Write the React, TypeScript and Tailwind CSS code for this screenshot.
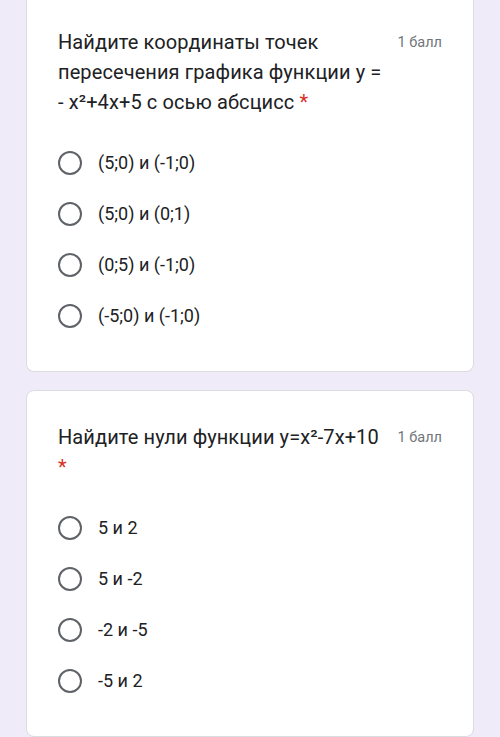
import React from 'react'

type Question = {
  lines: string[]
  options: string[]
}

const questions: Question[] = [
  {
    lines: ['Найдите координаты точек', 'пересечения графика функции у =', '- x²+4x+5 с осью абсцисс'],
    options: ['(5;0) и (-1;0)', '(5;0) и (0;1)', '(0;5) и (-1;0)', '(-5;0) и (-1;0)'],
  },
  {
    lines: ['Найдите нули функции у=x²-7x+10', ''],
    options: ['5 и 2', '5 и -2', '-2 и -5', '-5 и 2'],
  },
]

function Radio() {
  return <span className="h-6 w-6 shrink-0 rounded-full border-[2.5px] border-[#5f6368]" />
}

function QuestionCard({ q, first }: { q: Question; first?: boolean }) {
  return (
    <div
      className={
        first
          ? 'rounded-b-lg border border-t-0 border-[#dadce0] bg-white px-[31px] pt-[27px] pb-[30px]'
          : 'rounded-lg border border-[#dadce0] bg-white px-[31px] pt-[31px] pb-[30px]'
      }
    >
      <div className="flex items-start gap-[12px]">
        <div className="flex-1 text-[20px] leading-[30px] tracking-[0.1px] text-[#202124]">
          {q.lines.map((l, i) => (
            <div key={i} className="whitespace-nowrap">
              {l}
              {i === q.lines.length - 1 && (
                <span className="text-[#d93025]">{l ? ' *' : '*'}</span>
              )}
            </div>
          ))}
        </div>
        <div className="shrink-0 pt-[1px] text-[14.5px] leading-[30px] text-[#70757a]">1 балл</div>
      </div>
      <div className="mt-5">
        {q.options.map((o) => (
          <div key={o} className="flex h-[51px] items-center gap-4">
            <Radio />
            <span className="text-[18px] text-[#202124]">{o}</span>
          </div>
        ))}
      </div>
    </div>
  )
}

export default function App() {
  return (
    <div
      className="min-h-[737px] bg-[#f0ebf8] px-[26px]"
      style={{ fontFamily: 'Roboto, "Noto Sans", sans-serif' }}
    >
      <div className="flex flex-col gap-[18px]">
        <QuestionCard q={questions[0]} first />
        <QuestionCard q={questions[1]} />
      </div>
    </div>
  )
}
